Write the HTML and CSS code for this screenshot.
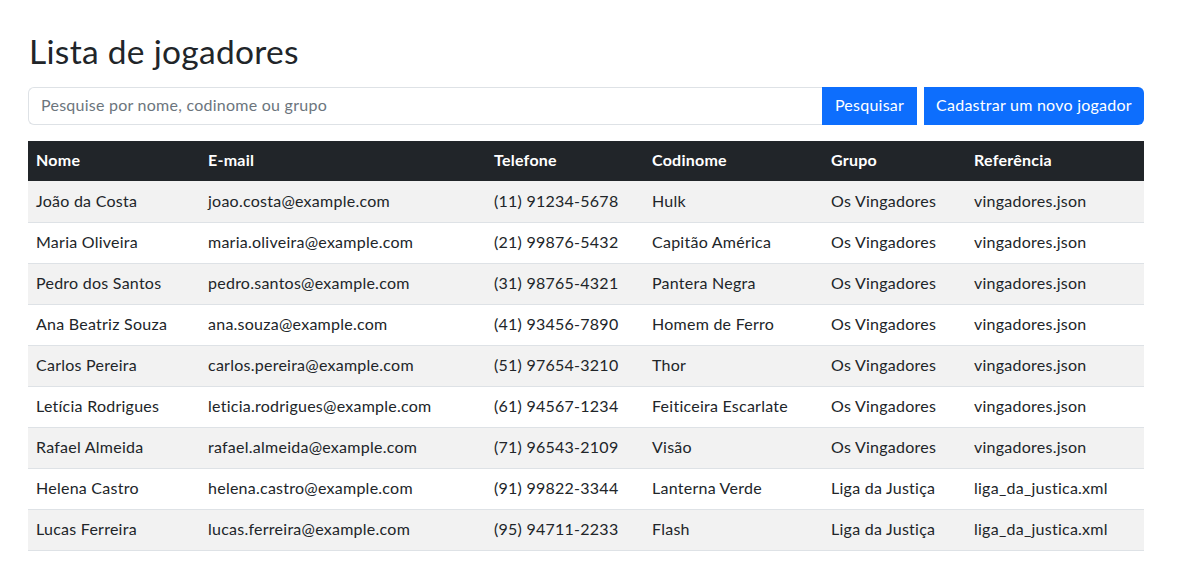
FILE: index.html
```html
<!DOCTYPE html>
<html lang="pt-BR">
<head>
<meta charset="utf-8">
<title>Lista de jogadores</title>
<link rel="stylesheet" href="styles.css">
</head>
<body>
<main class="page">
  <h2 class="title">Lista de jogadores</h2>
  <form class="search">
    <input class="search-input" type="text" placeholder="Pesquise por nome, codinome ou grupo">
    <button class="btn btn-search" type="button">Pesquisar</button>
    <button class="btn btn-new" type="button">Cadastrar um novo jogador</button>
  </form>
  <table class="players">
    <colgroup>
      <col class="c-nome"><col class="c-email"><col class="c-tel"><col class="c-cod"><col class="c-grupo"><col class="c-ref">
    </colgroup>
    <thead>
      <tr><th>Nome</th><th>E-mail</th><th>Telefone</th><th>Codinome</th><th>Grupo</th><th>Referência</th></tr>
    </thead>
    <tbody>
      <tr><td>João da Costa</td><td>joao.costa@example.com</td><td>(11) 91234-5678</td><td>Hulk</td><td>Os Vingadores</td><td>vingadores.json</td></tr>
      <tr><td>Maria Oliveira</td><td>maria.oliveira@example.com</td><td>(21) 99876-5432</td><td>Capitão América</td><td>Os Vingadores</td><td>vingadores.json</td></tr>
      <tr><td>Pedro dos Santos</td><td>pedro.santos@example.com</td><td>(31) 98765-4321</td><td>Pantera Negra</td><td>Os Vingadores</td><td>vingadores.json</td></tr>
      <tr><td>Ana Beatriz Souza</td><td>ana.souza@example.com</td><td>(41) 93456-7890</td><td>Homem de Ferro</td><td>Os Vingadores</td><td>vingadores.json</td></tr>
      <tr><td>Carlos Pereira</td><td>carlos.pereira@example.com</td><td>(51) 97654-3210</td><td>Thor</td><td>Os Vingadores</td><td>vingadores.json</td></tr>
      <tr><td>Letícia Rodrigues</td><td>leticia.rodrigues@example.com</td><td>(61) 94567-1234</td><td>Feiticeira Escarlate</td><td>Os Vingadores</td><td>vingadores.json</td></tr>
      <tr><td>Rafael Almeida</td><td>rafael.almeida@example.com</td><td>(71) 96543-2109</td><td>Visão</td><td>Os Vingadores</td><td>vingadores.json</td></tr>
      <tr><td>Helena Castro</td><td>helena.castro@example.com</td><td>(91) 99822-3344</td><td>Lanterna Verde</td><td>Liga da Justiça</td><td>liga_da_justica.xml</td></tr>
      <tr><td>Lucas Ferreira</td><td>lucas.ferreira@example.com</td><td>(95) 94711-2233</td><td>Flash</td><td>Liga da Justiça</td><td>liga_da_justica.xml</td></tr>
    </tbody>
  </table>
</main>
</body>
</html>
```
FILE: styles.css
```css
* { box-sizing: border-box; }
html, body { margin: 0; padding: 0; background: #fff; }
body {
  font-family: Lato, "Noto Sans", "Liberation Sans", sans-serif;
  font-size: 16px;
  letter-spacing: 0.25px;
  color: #212529;
}
.page {
  width: 1116px;
  margin-left: 28px;
  padding-top: 33px;
}
.title {
  margin: 0 0 16px 0;
  font-size: 33.5px;
  font-weight: 400;
  line-height: 36px;
  padding: 0 0 2px 1px;
  letter-spacing: 0.3px;
}
.search {
  display: flex;
  height: 38px;
  margin: 0 0 16px 0;
}
.search-input {
  flex: 1;
  height: 38px;
  border: 1px solid #dee2e6;
  border-right: none;
  border-radius: 6px 0 0 6px;
  padding: 4px 12px 8px 12px;
  font: inherit;
  letter-spacing: 0.25px;
  color: #212529;
  outline: none;
}
.search-input::placeholder { color: #6c757d; }
.btn {
  height: 38px;
  border: none;
  background: #0d6efd;
  color: #fff;
  font: inherit;
  letter-spacing: 0.25px;
  padding: 0 12px 3px 12px;
  cursor: pointer;
}
.btn-search { width: 95px; border-radius: 0; }
.btn-new { width: 220px; margin-left: 7px; border-radius: 0 6px 6px 0; }
.players {
  width: 1116px;
  table-layout: fixed;
  border-collapse: collapse;
}
.c-nome { width: 172px; }
.c-email { width: 286px; }
.c-tel { width: 158px; }
.c-cod { width: 179px; }
.c-grupo { width: 143px; }
.c-ref { width: 178px; }
.players th {
  background: #212529;
  color: #fff;
  font-weight: 700;
  text-align: left;
  height: 40px;
  padding: 0 8px 3px 8px;
}
.players td {
  height: 41px;
  padding: 0 8px 2px 8px;
  border-bottom: 1px solid #dee2e6;
  white-space: nowrap;
}
.players tbody tr:nth-child(odd) td { background: #f2f2f2; }
```
